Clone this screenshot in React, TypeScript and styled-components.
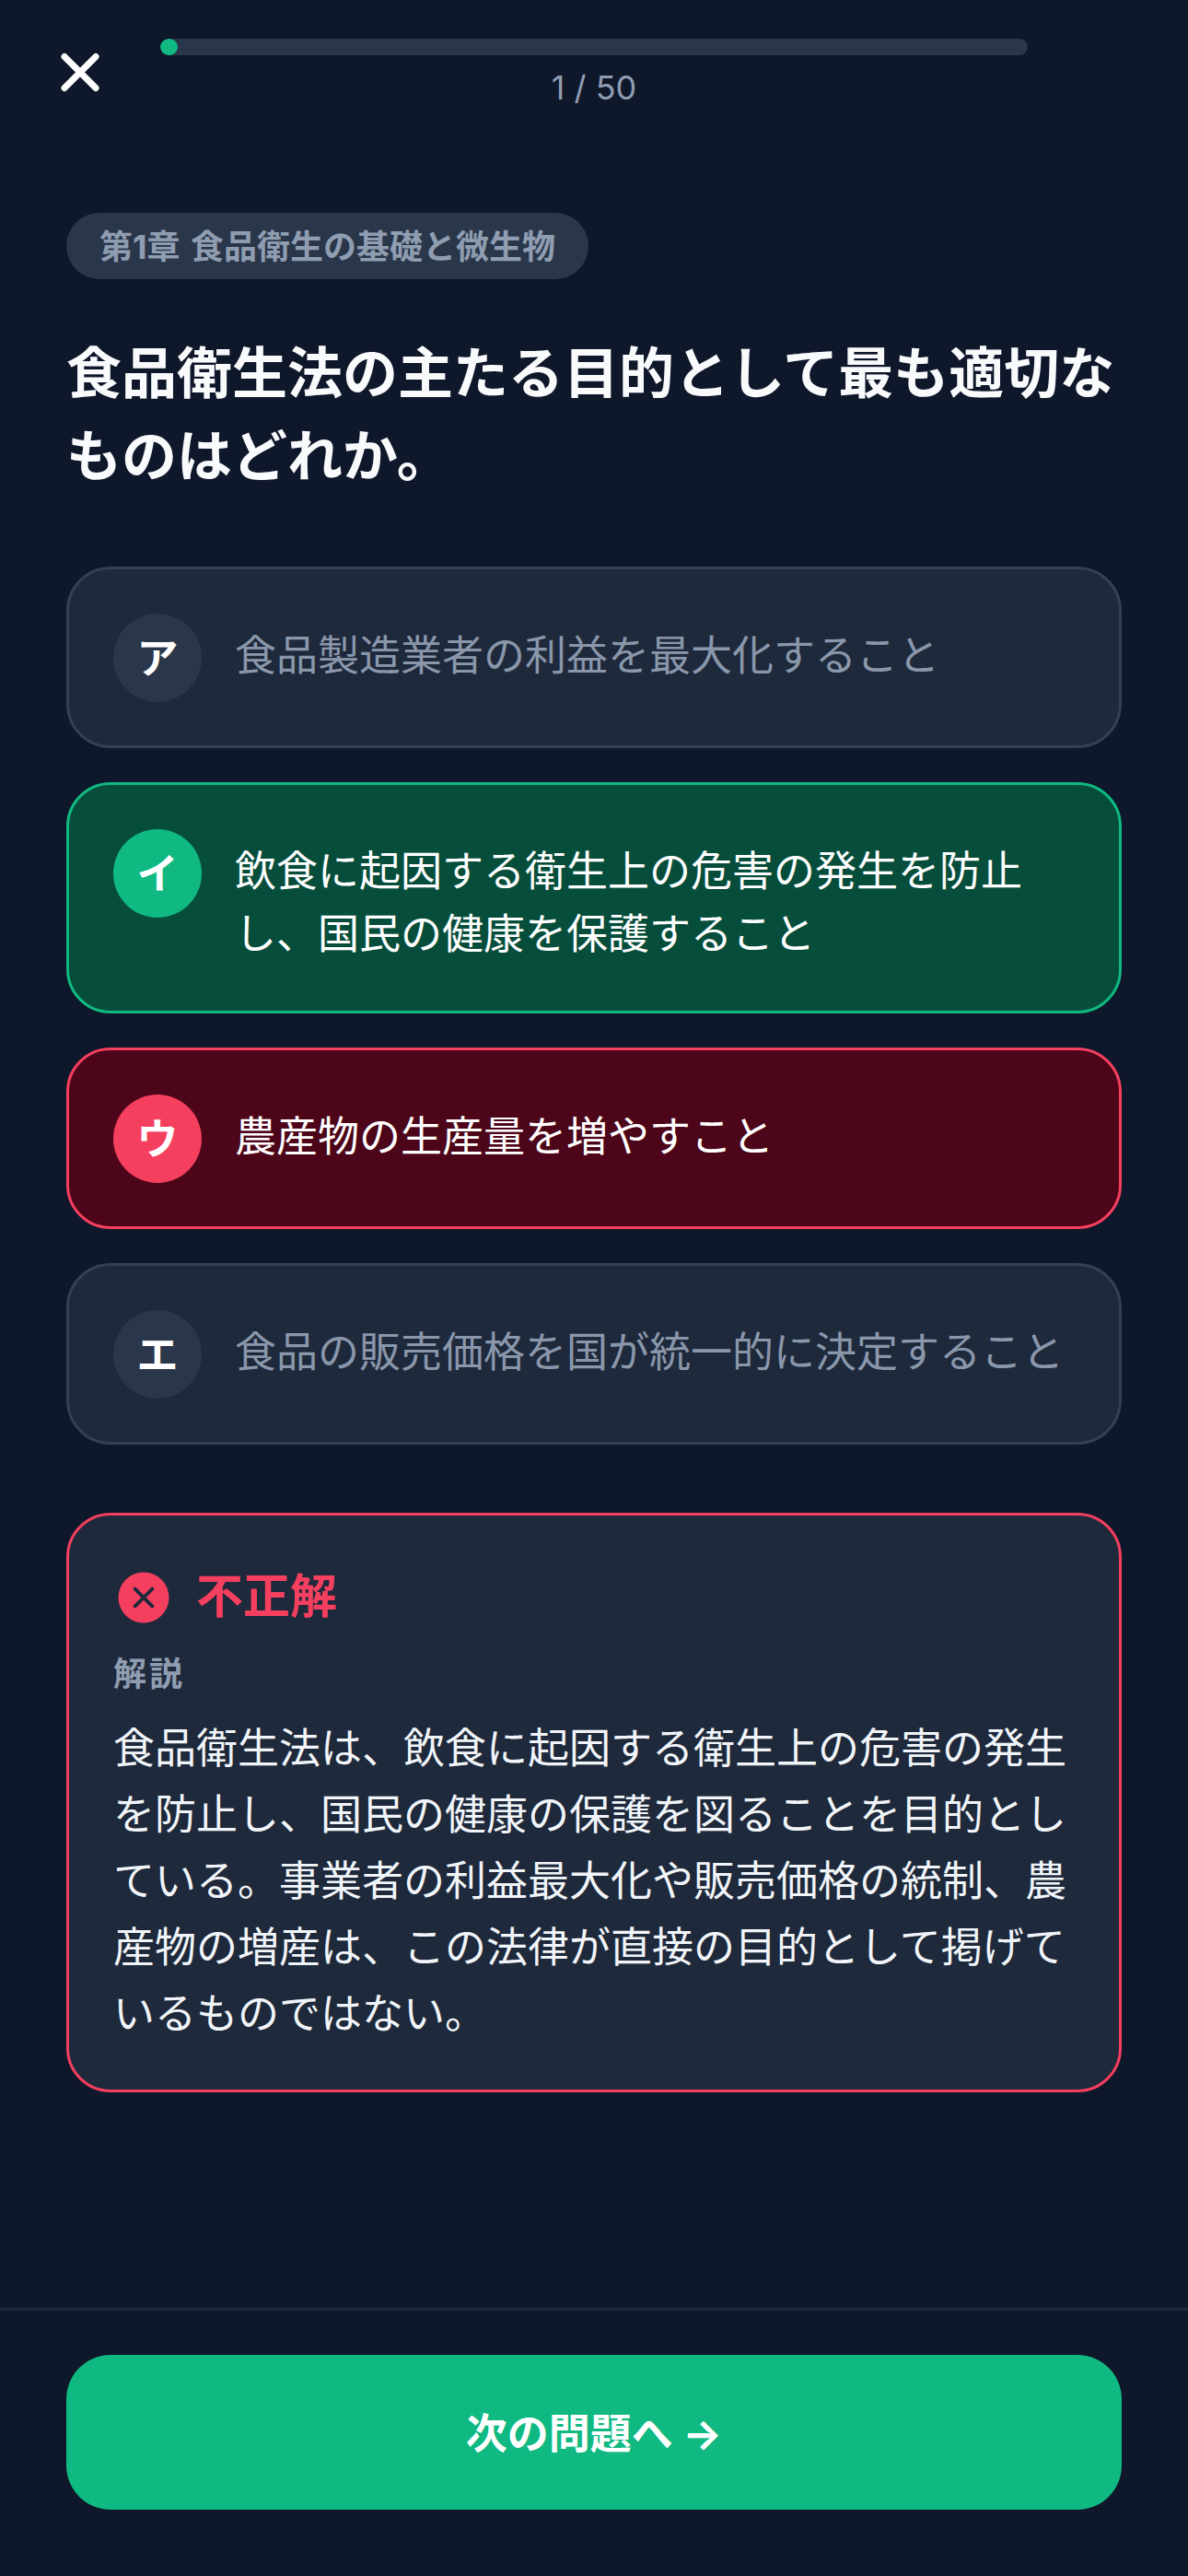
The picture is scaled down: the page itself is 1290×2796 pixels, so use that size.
import React from 'react'
import styled, { createGlobalStyle } from 'styled-components'

type OptionState = 'idle' | 'correct' | 'wrong'

type OptionData = {
  mark: string
  state: OptionState
  lines: string[]
}

const OPTIONS: OptionData[] = [
  { mark: 'ア', state: 'idle', lines: ['食品製造業者の利益を最大化すること'] },
  { mark: 'イ', state: 'correct', lines: ['飲食に起因する衛生上の危害の発生を防止', 'し、国民の健康を保護すること'] },
  { mark: 'ウ', state: 'wrong', lines: ['農産物の生産量を増やすこと'] },
  { mark: 'エ', state: 'idle', lines: ['食品の販売価格を国が統一的に決定すること'] },
]

export default function App() {
  return (
    <Page>
      <GlobalStyle />
      <Header>
        <CloseButton aria-label="閉じる">
          <svg width="42" height="43" viewBox="0 0 42 43" fill="none">
            <path d="M4 4.5 L38 38.5 M38 4.5 L4 38.5" stroke="#fff" strokeWidth="7" strokeLinecap="round" />
          </svg>
        </CloseButton>
        <Progress>
          <Track>
            <Fill style={{ width: `${(1 / 50) * 100}%` }} />
          </Track>
          <Count>1 / 50</Count>
        </Progress>
      </Header>

      <Main>
        <Chip>第1章 食品衛生の基礎と微生物</Chip>
        <Question>食品衛生法の主たる目的として最も適切なものはどれか。</Question>

        <OptionList>
          {OPTIONS.map((o) => (
            <OptionCard key={o.mark} $state={o.state}>
              <Mark $state={o.state}>{o.mark}</Mark>
              <OptionText $state={o.state}>
                {o.lines.map((l) => (
                  <span key={l}>{l}</span>
                ))}
              </OptionText>
            </OptionCard>
          ))}
        </OptionList>

        <Explanation>
          <ResultRow>
            <svg width="66" height="66" viewBox="0 0 24 24" fill="none">
              <circle cx="12" cy="12" r="10" fill="#f43f5e" />
              <path d="M8.6 8.6 L15.4 15.4 M15.4 8.6 L8.6 15.4" stroke="#1e293b" strokeWidth="1.4" strokeLinecap="round" />
            </svg>
            <ResultText>不正解</ResultText>
          </ResultRow>
          <ExplainLabel>解説</ExplainLabel>
          <ExplainBody>
            食品衛生法は、飲食に起因する衛生上の危害の発生を防止し、国民の健康の保護を図ることを目的としている。事業者の利益最大化や販売価格の統制、農産物の増産は、この法律が直接の目的として掲げているものではない。
          </ExplainBody>
        </Explanation>
      </Main>

      <Footer>
        <NextButton>次の問題へ →</NextButton>
      </Footer>
    </Page>
  )
}

const GlobalStyle = createGlobalStyle`
  html, body {
    margin: 0;
    padding: 0;
    background: #0f172a;
  }
  * {
    box-sizing: border-box;
  }
`

const cardColors = {
  idle: { bg: '#1e293b', border: '#334155', mark: '#2a3649', text: '#8a97ab' },
  correct: { bg: '#064e3b', border: '#10b981', mark: '#10b981', text: '#ffffff' },
  wrong: { bg: '#4c0519', border: '#f43f5e', mark: '#f43f5e', text: '#ffffff' },
}

const Page = styled.div`
  width: 1290px;
  height: 2796px;
  display: flex;
  flex-direction: column;
  background: #0f172a;
  color: #fff;
  font-family: Inter, "Noto Sans CJK JP", sans-serif;
`

const Header = styled.header`
  display: flex;
  align-items: flex-start;
  gap: 66px;
  padding: 42px 0 0 66px;
`

const CloseButton = styled.button`
  width: 42px;
  height: 43px;
  margin-top: 15px;
  padding: 0;
  border: none;
  background: none;
  display: flex;
`

const Progress = styled.div`
  width: 942px;
  display: flex;
  flex-direction: column;
  align-items: center;
  gap: 12px;
`

const Track = styled.div`
  width: 100%;
  height: 18px;
  border-radius: 9px;
  background: #2a3649;
  overflow: hidden;
`

const Fill = styled.div`
  height: 100%;
  border-radius: 9px;
  background: #10b981;
`

const Count = styled.div`
  font-size: 36px;
  line-height: 47px;
  color: #8f9db1;
`

const Main = styled.main`
  flex: 1;
  padding: 112px 72px 0;
`

const Chip = styled.div`
  display: inline-flex;
  align-items: center;
  height: 72px;
  padding: 0 36px 4px;
  border-radius: 36px;
  background: #2a3649;
  color: #8f9db1;
  font-size: 36px;
  font-weight: 700;
  word-spacing: 3px;
`

const Question = styled.h1`
  margin: 57px 0 75px;
  font-size: 60px;
  line-height: 90px;
  font-weight: 700;
  color: #f8fafc;
`

const OptionList = styled.div`
  display: flex;
  flex-direction: column;
  gap: 37px;
`

const OptionCard = styled.div<{ $state: OptionState }>`
  display: flex;
  align-items: flex-start;
  gap: 36px;
  padding: 48px 48px 47px;
  border: 3px solid ${(p) => cardColors[p.$state].border};
  border-radius: 48px;
  background: ${(p) => cardColors[p.$state].bg};
`

const Mark = styled.div<{ $state: OptionState }>`
  flex: none;
  width: 96px;
  height: 96px;
  padding-bottom: 5px;
  border-radius: 50%;
  display: flex;
  align-items: center;
  justify-content: center;
  background: ${(p) => cardColors[p.$state].mark};
  color: #fff;
  font-size: 45px;
  font-weight: 700;
`

const OptionText = styled.div<{ $state: OptionState }>`
  display: flex;
  flex-direction: column;
  margin: 12px 0 2px;
  font-size: 45px;
  line-height: 68px;
  white-space: nowrap;
  color: ${(p) => cardColors[p.$state].text};
`

const Explanation = styled.section`
  margin-top: 74px;
  padding: 48px 48px 46px;
  border: 3px solid #f43f5e;
  border-radius: 48px;
  background: #1e293b;
`

const ResultRow = styled.div`
  display: flex;
  align-items: center;
  gap: 24px;
  height: 81px;
`

const ResultText = styled.div`
  margin-bottom: 10px;
  font-size: 51px;
  font-weight: 700;
  color: #f43f5e;
`

const ExplainLabel = styled.div`
  margin-top: 16px;
  font-size: 36px;
  line-height: 54px;
  font-weight: 700;
  letter-spacing: 3px;
  color: #8f9db1;
`

const ExplainBody = styled.p`
  margin: 18px 0 0;
  font-size: 45px;
  line-height: 72px;
  color: #f1f5f9;
`

const Footer = styled.footer`
  padding: 48px 72px 72px;
  border-top: 3px solid #1e293b;
`

const NextButton = styled.button`
  display: block;
  width: 100%;
  height: 168px;
  padding: 0 0 3px;
  border: none;
  border-radius: 48px;
  background: #10b981;
  color: #fff;
  font-family: inherit;
  font-size: 45px;
  font-weight: 700;
`
